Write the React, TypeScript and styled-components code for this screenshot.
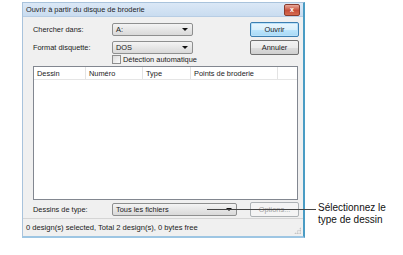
import styled, { createGlobalStyle, css } from "styled-components"

const GlobalStyle = createGlobalStyle`
  html, body {
    margin: 0;
    padding: 0;
    background: #fff;
  }
  body {
    width: 403px;
    height: 255px;
    overflow: hidden;
    font-family: "Liberation Sans", Arial, sans-serif;
  }
`

const Page = styled.div`
  position: relative;
  display: flex;
  align-items: flex-start;
  padding: 2px 0 0 22px;
  width: 403px;
  height: 255px;
  box-sizing: border-box;
`

const Window = styled.div`
  display: flex;
  flex-direction: column;
  width: 283px;
  height: 236px;
  box-sizing: border-box;
  border: 1px solid #a9c3dc;
  border-right: 2px solid #4a9cc4;
  border-bottom: 2px solid #9ec6e3;
  background: #f0f0f0;
  font-size: 7.4px;
  color: #1a1a1a;
`

const TitleBar = styled.div`
  display: flex;
  align-items: center;
  justify-content: space-between;
  height: 13px;
  padding: 0 3px 0 3px;
  background: linear-gradient(#dbe8f6, #c9dcf0);
  border-bottom: 1px solid #b7cde4;
`

const Title = styled.span`
  font-size: 7.4px;
  color: #1e1e1e;
`

const CloseButton = styled.div`
  display: flex;
  align-items: center;
  justify-content: center;
  width: 14px;
  height: 10px;
  border-radius: 2px;
  border: 1px solid #8a3b2d;
  background: linear-gradient(#e9a99b, #c7503a 55%, #d56a4f);
  color: #fff;
  font-size: 7px;
  font-weight: bold;
  line-height: 1;
`

const Body = styled.div`
  display: flex;
  flex-direction: column;
  flex: 1;
  padding: 5px 4px 0 10px;
`

const Row = styled.div<{ $mt?: number }>`
  display: flex;
  align-items: center;
  margin-top: ${({ $mt }) => $mt ?? 0}px;
  height: 15px;
`

const Label = styled.span`
  width: 79px;
  flex-shrink: 0;
`

const Combo = styled.div<{ $w: number }>`
  display: flex;
  align-items: center;
  justify-content: space-between;
  width: ${({ $w }) => $w}px;
  height: 13px;
  box-sizing: border-box;
  padding: 0 4px 0 3px;
  border: 1px solid #8e8f8f;
  border-radius: 2px;
  background: linear-gradient(#f4f4f4, #e6e6e6 50%, #d9d9d9);
`

const Arrow = styled.span`
  width: 0;
  height: 0;
  border-left: 3px solid transparent;
  border-right: 3px solid transparent;
  border-top: 3px solid #111;
`

const Spacer = styled.div`
  flex: 1;
`

const Button = styled.div<{ $primary?: boolean; $disabled?: boolean }>`
  display: flex;
  align-items: center;
  justify-content: center;
  width: 49px;
  height: 15px;
  box-sizing: border-box;
  border: 1px solid #707070;
  border-radius: 2px;
  background: linear-gradient(#f2f2f2, #ebebeb 50%, #dddddd 51%, #cfcfcf);
  ${({ $primary }) =>
    $primary &&
    css`
      border-color: #3c7fb1;
      background: linear-gradient(#eaf6fd, #d9f0fc 50%, #bee6fd 51%, #a7d9f5);
      box-shadow: inset 0 0 0 1px #b9e1f9;
    `}
  ${({ $disabled }) =>
    $disabled &&
    css`
      border-color: #adb2b5;
      background: #f4f4f4;
      color: #a0a0a0;
    `}
`

const CheckRow = styled.div`
  display: flex;
  align-items: center;
  gap: 2px;
  height: 10px;
  margin-left: 79px;
  margin-top: -1px;
`

const CheckBox = styled.span`
  width: 7px;
  height: 7px;
  border: 1px solid #8f8f8f;
  background: linear-gradient(135deg, #dcdcdc, #fbfbfb);
`

const ListBox = styled.div`
  display: flex;
  flex-direction: column;
  margin-top: 2px;
  width: 265px;
  height: 134px;
  box-sizing: border-box;
  border: 1px solid #828790;
  background: #fff;
`

const ListHeader = styled.div`
  display: flex;
  height: 12px;
  border-bottom: 1px solid #e5e5e5;
`

const HeaderCell = styled.div<{ $w: number }>`
  display: flex;
  align-items: center;
  width: ${({ $w }) => $w}px;
  padding-left: 3px;
  box-sizing: border-box;
  border-right: 1px solid #e3e3e3;
`

const BottomRow = styled.div`
  display: flex;
  align-items: center;
  height: 15px;
  margin-top: 2px;
`

const StatusBar = styled.div`
  display: flex;
  align-items: center;
  justify-content: space-between;
  height: 17px;
  margin-top: 1px;
  padding: 0 2px 0 3px;
  border-top: 1px solid #d5d5d5;
  background: #f0f0f0;
  font-size: 7.6px;
`

const Grip = styled.span`
  align-self: flex-end;
  margin-bottom: 2px;
  width: 7px;
  height: 7px;
  background: radial-gradient(circle, #b5b5b5 0.7px, transparent 1px) 0 0 / 2.5px 2.5px;
  clip-path: polygon(100% 0, 100% 100%, 0 100%);
`

const Callout = styled.div`
  position: absolute;
  left: 207px;
  top: 202px;
  display: flex;
  align-items: flex-start;
`

const CalloutLine = styled.div`
  width: 109px;
  height: 1px;
  margin-top: 7px;
  background: #444;
`

const CalloutText = styled.div`
  padding-left: 2px;
  font-family: "Liberation Sans", Arial, sans-serif;
  font-size: 10px;
  line-height: 12px;
  color: #111;
`

export default function App() {
  return (
    <>
      <GlobalStyle />
      <Page>
        <Window>
          <TitleBar>
            <Title>Ouvrir à partir du disque de broderie</Title>
            <CloseButton>x</CloseButton>
          </TitleBar>
          <Body>
            <Row>
              <Label>Chercher dans:</Label>
              <Combo $w={81}>
                <span>A:</span>
                <Arrow />
              </Combo>
              <Spacer />
              <Button $primary>Ouvrir</Button>
            </Row>
            <Row $mt={3}>
              <Label>Format disquette:</Label>
              <Combo $w={81}>
                <span>DOS</span>
                <Arrow />
              </Combo>
              <Spacer />
              <Button>Annuler</Button>
            </Row>
            <CheckRow>
              <CheckBox />
              <span>Détection automatique</span>
            </CheckRow>
            <ListBox>
              <ListHeader>
                <HeaderCell $w={52}>Dessin</HeaderCell>
                <HeaderCell $w={57}>Numéro</HeaderCell>
                <HeaderCell $w={48}>Type</HeaderCell>
                <HeaderCell $w={87}>Points de broderie</HeaderCell>
              </ListHeader>
            </ListBox>
            <BottomRow>
              <Label>Dessins de type:</Label>
              <Combo $w={125}>
                <span>Tous les fichiers</span>
                <Arrow />
              </Combo>
              <Spacer />
              <Button $disabled>Options...</Button>
            </BottomRow>
          </Body>
          <StatusBar>
            <span>0 design(s) selected, Total 2 design(s), 0 bytes free</span>
            <Grip />
          </StatusBar>
        </Window>
        <Callout>
          <CalloutLine />
          <CalloutText>
            Sélectionnez le
            <br />
            type de dessin
          </CalloutText>
        </Callout>
      </Page>
    </>
  )
}
